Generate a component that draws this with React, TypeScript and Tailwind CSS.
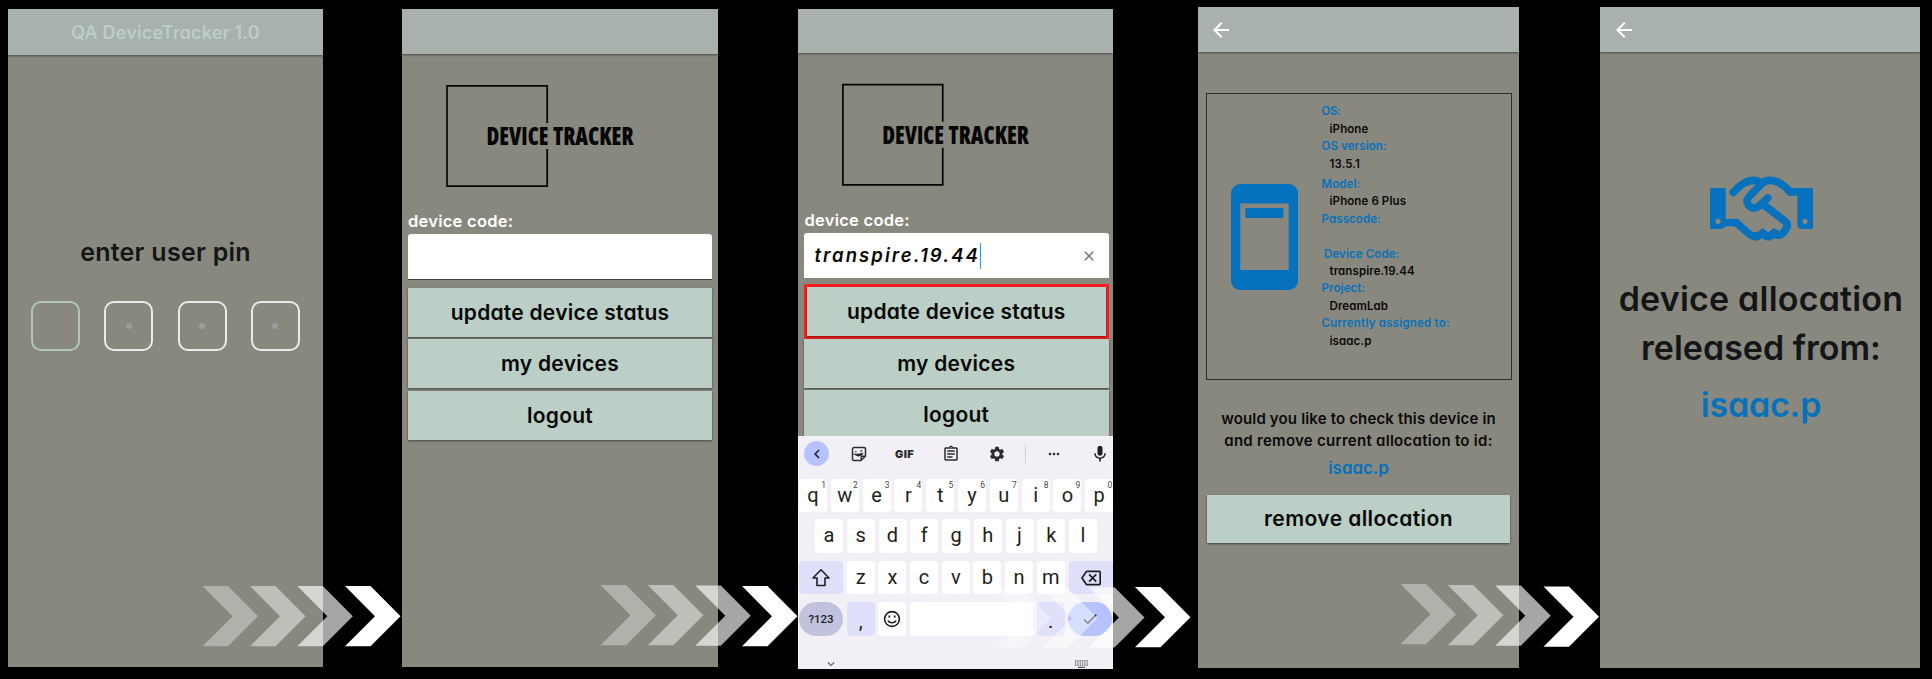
import type { ReactNode } from 'react';
import { MdArrowBack, MdCheck, MdChevronLeft, MdClose, MdKeyboardArrowDown, MdMic, MdMoreHoriz, MdOutlineAssignment, MdOutlineBackspace, MdSettings } from 'react-icons/md';

function Header({ children, className }: { children?: ReactNode; className: string }) {
  return (
    <header className={`flex shrink-0 items-center bg-[#a8b1ab] shadow-[0_1px_2px_rgba(0,0,0,0.45)] ${className}`}>
      {children}
    </header>
  );
}

function Logo() {
  return (
    <svg className="block h-[154.5px] w-full shrink-0" viewBox="0 0 316 154.5" preserveAspectRatio="xMinYMin meet">
      <path d="M145.2 69V31.8H45V132.2H145.2V95" fill="none" stroke="#060606" strokeWidth="1.7" />
      <g fill="#060606" fontSize="25.5" className="font-['Open_Sans'] font-extrabold [font-stretch:75%]">
        <text x="84.500" y="91" textLength="62" lengthAdjust="spacingAndGlyphs">DEVICE</text>
        <text x="151" y="91" textLength="80.500" lengthAdjust="spacingAndGlyphs">TRACKER</text>
      </g>
    </svg>
  );
}

function MenuButton({ label, tracking }: { label: string; tracking: string }) {
  return (
    <button className={`h-[49px] w-full shrink-0 bg-[#bbcfc6] text-[21px] font-semibold text-[#080808] shadow-[0_1px_2px_rgba(0,0,0,0.5)] ${tracking}`}>
      {label}
    </button>
  );
}

function PinScreen() {
  return (
    <section className="flex h-[658px] w-[315px] shrink-0 flex-col bg-[#89887f]">
      <Header className="h-[46px] justify-center">
        <h1 className="text-[18px] font-semibold tracking-[0.16px] text-[#bbcfc6]">QA DeviceTracker 1.0</h1>
      </Header>
      <p className="mt-[179px] text-center text-[25px] leading-9 font-semibold tracking-[0.250px] text-[#141517]">enter user pin</p>
      <div className="mt-[31px] flex justify-between px-[23px]">
        <span className="h-[50px] w-[49px] rounded-[10px] border-2 border-[#b1c6bc]" />
        {[1, 2, 3].map((n) => (
          <span key={n} className="flex h-[50px] w-[49px] items-center justify-center rounded-[10px] border-2 border-[#ebebef]">
            <span className="size-1.5 rounded-full bg-[#9c9ca0]" />
          </span>
        ))}
      </div>
    </section>
  );
}

function MenuScreen() {
  return (
    <section className="ml-[79px] flex h-[658px] w-[316px] shrink-0 flex-col bg-[#89887f]">
      <Header className="h-[45px]" />
      <Logo />
      <div className="flex flex-col px-1.5">
        <p className="text-[16.500px] leading-6 font-semibold tracking-[0.250px] text-white">device code:</p>
        <div className="mt-[1.5px] h-[46px] rounded-t-[3px] border-b border-[#44443f] bg-white" />
        <div className="mt-2 flex flex-col gap-[2.4px]">
          <MenuButton label="update device status" tracking="tracking-[0.25px]" />
          <MenuButton label="my devices" tracking="tracking-[0.28px]" />
          <MenuButton label="logout" tracking="tracking-[0.25px]" />
        </div>
      </div>
    </section>
  );
}

const TOP_ROW = ['q', 'w', 'e', 'r', 't', 'y', 'u', 'i', 'o', 'p'];

function Key({ children, className }: { children?: ReactNode; className: string }) {
  return <span className={`flex items-center justify-center ${className}`}>{children}</span>;
}

function LetterKeys({ letters }: { letters: string }) {
  return (
    <>
      {letters.split('').map((c) => (
        <Key key={c} className="h-full w-7 shrink-0 rounded-[4px] bg-white pb-px">
          {c}
        </Key>
      ))}
    </>
  );
}

function Keyboard() {
  return (
    <div className="mt-auto flex h-[233px] shrink-0 flex-col overflow-hidden bg-[#f2f0f6] font-['Roboto'] text-[20px] text-[#1d1e22]">
      <div className="flex h-[35px] items-center pl-1.5">
        <span className="flex size-[25px] shrink-0 items-center justify-center rounded-full bg-[#b5c3ff]">
          <MdChevronLeft className="size-[18px]" />
        </span>
        <svg className="ml-[21.500px] size-4 shrink-0" viewBox="0 0 16 16" fill="none" stroke="#2c2d31" strokeWidth="1.5">
          <path d="M3 1.5H13A1.5 1.5 0 0 1 14.500 3V10L10 14.500H3A1.500 1.500 0 0 1 1.500 13V3A1.500 1.500 0 0 1 3 1.500ZM14 10.200H11.200A1 1 0 0 0 10.200 11.200V14" />
          <path d="M4.200 8.500Q8 11.500 11.800 7.500Q8 9 4.200 8.500ZM4.800 5.200V6.200M9.500 5H11.200" />
        </svg>
        <span className="ml-[26px] w-6 text-center font-['Inter'] text-[11px] leading-4 font-black tracking-[0.4px] text-[#2c2d31]">GIF</span>
        <MdOutlineAssignment className="ml-[25px] size-[18px] shrink-0 text-[#2c2d31]" />
        <MdSettings className="ml-7 size-[18px] shrink-0 text-[#2c2d31]" />
        <span className="ml-[19.500px] h-[18px] w-px bg-[#cfced4]" />
        <MdMoreHoriz className="ml-[20px] size-4 shrink-0 text-[#2c2d31]" />
        <MdMic className="ml-[28px] size-5 shrink-0" />
      </div>
      <div className="mt-[7.5px] flex h-[33px] gap-[3.8px] pl-px">
        {TOP_ROW.map((c, i) => (
          <Key key={c} className="relative h-full w-7 shrink-0 rounded-[4px] bg-white pb-px">
            {c}
            <span className="absolute top-0.5 right-px text-[8.5px] leading-[8px] text-[#44454a]">{(i + 1) % 10}</span>
          </Key>
        ))}
      </div>
      <div className="mt-[7.500px] flex h-[33.500px] gap-[3.750px] pl-[17px]">
        <LetterKeys letters="asdfghjkl" />
      </div>
      <div className="mt-[8.500px] flex h-[33px] gap-[3.700px] pl-px">
        <Key className="w-11 shrink-0 rounded-[4px] bg-[#dee0f9]">
          <svg className="size-5" viewBox="0 0 20 20" fill="none" stroke="#1d1e22" strokeWidth="1.600" strokeLinejoin="round">
            <path d="M10 1.800L18 10H14V17.500H6V10H2Z" />
          </svg>
        </Key>
        <LetterKeys letters="zxcvbnm" />
        <Key className="w-11 shrink-0 rounded-[4px] bg-[#dee0f9]">
          <MdOutlineBackspace className="size-5" />
        </Key>
      </div>
      <div className="mt-2 flex h-[34px] gap-[3.700px] pl-px">
        <Key className="w-11 shrink-0 rounded-full bg-[#c1c3de] pt-px text-[11.500px] font-medium">?123</Key>
        <Key className="w-7 shrink-0 rounded-[4px] bg-[#dee0f9] pt-1">,</Key>
        <Key className="w-7 shrink-0 rounded-[4px] bg-white">
          <svg className="size-[18px]" viewBox="0 0 18 18" fill="none" stroke="#1d1e22" strokeWidth="1.600">
            <circle cx="9" cy="9" r="7.400" />
            <path d="M5 10.500Q6 12.800 9 12.800T13 10.500" />
            <path d="M6.300 5.500v2M11.700 5.500v2" strokeWidth="1.800" />
          </svg>
        </Key>
        <Key className="w-[123px] shrink-0 rounded-[4px] bg-white" />
        <Key className="w-7 shrink-0 rounded-[4px] bg-[#dee0f9] pt-1">.</Key>
        <Key className="w-11 shrink-0 rounded-full bg-[#b5c3ff]">
          <MdCheck className="size-[18px]" />
        </Key>
      </div>
      <div className="mt-auto flex h-[11px] items-center justify-between pr-[25px] pl-[26px] text-[#55565a]">
        <MdKeyboardArrowDown className="size-[14px]" />
        <svg className="h-2 w-[13px]" viewBox="0 0 13 8" stroke="#55565a" strokeWidth="1.200">
          <path d="M0 .800H13M0 3H13M0 5.200H13" strokeDasharray="1.400 0.900" />
          <path d="M3 7.400H10" />
        </svg>
      </div>
    </div>
  );
}

function EntryScreen() {
  return (
    <section className="ml-20 flex h-[660px] w-[315px] shrink-0 flex-col bg-[#89887f]">
      <Header className="h-11" />
      <Logo />
      <div className="flex h-[228.500px] shrink-0 flex-col overflow-hidden pr-1 pl-[5.500px]">
        <p className="pl-px text-[16.500px] leading-6 font-semibold tracking-[0.250px] text-white">device code:</p>
        <div className="mt-[1.500px] flex h-[45px] shrink-0 items-center rounded-t-[3px] bg-white pr-3 pl-[11px] pt-px">
          <span className="text-[18.500px] font-semibold tracking-[2.050px] text-[#080808] italic">transpire.19.44</span>
          <span className="h-[26px] w-px bg-[#2196f3]" />
          <MdClose className="ml-auto size-4 text-[#6e6e6e]" />
        </div>
        <div className="mt-1.5 flex flex-col">
          <div className="h-[55px] shrink-0 border-[3px] border-[#fb2020]">
            <MenuButton label="update device status" tracking="tracking-[0.25px]" />
          </div>
          <div className="flex flex-col gap-[2.400px]">
            <MenuButton label="my devices" tracking="tracking-[0.28px]" />
            <MenuButton label="logout" tracking="tracking-[0.25px]" />
          </div>
        </div>
      </div>
      <Keyboard />
    </section>
  );
}

function Field({ label, value, className = '', labelClass = '' }: { label: string; value: string; className?: string; labelClass?: string }) {
  return (
    <div className={className}>
      <dt className={`text-[#0671bc] ${labelClass}`}>{label}</dt>
      <dd className="min-h-[17.400px] pl-2 text-[#0a0a0a]">{value}</dd>
    </div>
  );
}

function DeviceScreen() {
  return (
    <section className="mt-[-2px] ml-[85px] flex h-[661px] w-[321px] shrink-0 flex-col bg-[#89887f]">
      <Header className="h-[45px] pl-[11px]">
        <MdArrowBack className="size-6 text-white" />
      </Header>
      <div className="mt-[41px] ml-2 flex h-[287px] w-[306px] shrink-0 border border-[#2c2c29]">
        <svg className="mt-[90px] ml-6 h-[106px] w-[67px]" viewBox="0 0 67 106" fill="#0671bc">
          <path fillRule="evenodd" d="M9 0H58A9 9 0 0 1 67 9V97A9 9 0 0 1 58 106H9A9 9 0 0 1 0 97V9A9 9 0 0 1 9 0ZM9.300 19.500V86H57.700V19.500Z" />
          <path d="M14.300 24H52.500V34H14.300Z" />
        </svg>
        <dl className="mt-[9.300px] ml-[23.500px] text-[11.500px] leading-[17.400px] font-semibold tracking-[0.100px]">
          <Field label="OS:" value="iPhone" labelClass="tracking-[-0.4px]" />
          <Field label="OS version:" value="13.5.1" />
          <Field label="Model:" value="iPhone 6 Plus" className="mt-[3px]" />
          <Field label="Passcode:" value="" />
          <Field label="Device Code:" value="transpire.19.44" labelClass="pl-[2.5px]" />
          <Field label="Project:" value="DreamLab" />
          <Field label="Currently assigned to:" value="isaac.p" labelClass="tracking-[0.21px]" />
        </dl>
      </div>
      <div className="mt-[27.500px] text-center text-[15px] leading-[22px] font-semibold text-[#0a0a0a]">
        <p className="tracking-[0.160px]">would you like to check this device in</p>
        <p className="tracking-[0.280px]">and remove current allocation to id:</p>
        <p className="mt-1 text-[17px] leading-6 tracking-[-0.05px] text-[#0671bc]">isaac.p</p>
      </div>
      <div className="mt-[15px] pr-[9px] pl-[9px]">
        <button className="h-12 w-full bg-[#bbcfc6] text-[21px] font-semibold tracking-[0.400px] text-[#080808] shadow-[0_1px_2px_rgba(0,0,0,0.5)]">
          remove allocation
        </button>
      </div>
    </section>
  );
}

function Handshake() {
  return (
    <svg className="mx-auto h-[67px] w-[103px]" viewBox="360 525 309 201" fill="none" stroke="#0671bc" strokeWidth="23">
      <path stroke="none" fill="#0671bc" fillRule="evenodd" d="M360 564H407V657H442V679H406Q402 687 392 687H360ZM376 664a8 8 0 1 0 16 0a8 8 0 1 0-16 0Z" />
      <path stroke="none" fill="#0671bc" fillRule="evenodd" d="M596 564H669V687H636Q622 687 622 673V587H596ZM637 664a8 8 0 1 0 16 0a8 8 0 1 0-16 0Z" />
      <path strokeLinecap="round" d="M430 577Q461 541 490 541Q504 541 514 549" />
      <path strokeLinecap="round" d="M600 576Q570 541 540 541Q525 541 515 551L477 590Q466 603 476 616Q490 631 507 618L533 594" />
      <path d="M518 612L584 663Q597 673 588 687L579 699Q570 708 556 703" />
      <path d="M430 668H439L474 699Q492 716 510 704" />
      <path stroke="none" fill="#0671bc" d="M495 699Q504 698 517 684L535 697L552 684L568 694L572 716Q561 717 553 714Q536 730 517 715Q506 723 495 722Z" />
    </svg>
  );
}

function DoneScreen() {
  return (
    <section className="mt-[-2px] ml-[81px] flex h-[661px] w-80 shrink-0 flex-col bg-[#89887f]">
      <Header className="h-[45px] pl-3">
        <MdArrowBack className="size-6 text-white" />
      </Header>
      <div className="mt-[123px] pl-0.5">
        <Handshake />
        <div className="mt-[31.500px] text-center text-[34px] leading-[49px] font-semibold text-[#141517]">
          <p className="tracking-[0.200px]">device allocation</p>
          <p className="tracking-[0px]">released from:</p>
          <p className="mt-2 tracking-[-0.200px] text-[#0671bc]">isaac.p</p>
        </div>
      </div>
    </section>
  );
}

const ARROWS = [
  { x: [202.5, 250, 297.3, 345], y: [586, 586, 586, 586] },
  { x: [600.5, 647.8, 695.3, 742], y: [585, 585, 585.5, 586] },
  { x: [995.5, 1042, 1089, 1135], y: [588, 588, 587.3, 587] },
  { x: [1400.5, 1447.8, 1495.3, 1543.5], y: [584, 585, 585.5, 586.5] },
];
const OPACITY = [0.34, 0.46, 0.65, 1];

export default function App() {
  return (
    <main className="relative flex h-[679px] w-[1932px] items-start overflow-hidden bg-black pt-[9px] pl-2 font-['Inter',sans-serif] [font-feature-settings:'cv11']">
      <PinScreen />
      <MenuScreen />
      <EntryScreen />
      <DeviceScreen />
      <DoneScreen />
      <svg className="pointer-events-none absolute inset-0" width="1932" height="679" fill="#fff">
        {ARROWS.map((set, s) =>
          set.x.map((x, i) => (
            <path key={`${s}-${i}`} transform={`translate(${x} ${set.y[i]})`} opacity={OPACITY[i]} d="M0 0H25.500L55.500 30.200L25.500 60.300H0L30 30.200Z" />
          )),
        )}
      </svg>
    </main>
  );
}
